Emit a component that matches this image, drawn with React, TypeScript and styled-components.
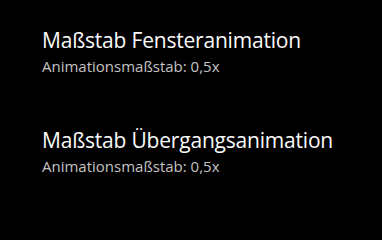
import React from 'react';
import styled, { createGlobalStyle } from 'styled-components';

const GlobalStyle = createGlobalStyle`
  html, body {
    margin: 0;
    padding: 0;
    background: #000;
  }
  body {
    font-family: 'Open Sans', 'Liberation Sans', sans-serif;
    -webkit-font-smoothing: antialiased;
  }
`;

const Screen = styled.div`
  width: 382px;
  height: 217px;
  background: #000;
  display: flex;
  flex-direction: column;
  padding: 26px 0 0 42px;
  box-sizing: border-box;
  gap: 50px;
`;

const Item = styled.div`
  display: flex;
  flex-direction: column;
`;

const Title = styled.div`
  font-size: 21px;
  line-height: 28px;
  color: #fafafa;
  letter-spacing: -0.2px;
`;

const Summary = styled.div`
  font-size: 15px;
  line-height: 20px;
  margin-top: 2px;
  color: #c4c4c4;
`;

const settings = [
  { title: 'Maßstab Fensteranimation', summary: 'Animationsmaßstab: 0,5x' },
  { title: 'Maßstab Übergangsanimation', summary: 'Animationsmaßstab: 0,5x' },
];

export default function App() {
  return (
    <>
      <GlobalStyle />
      <Screen>
        {settings.map(s => (
          <Item key={s.title}>
            <Title>{s.title}</Title>
            <Summary>{s.summary}</Summary>
          </Item>
        ))}
      </Screen>
    </>
  );
}
